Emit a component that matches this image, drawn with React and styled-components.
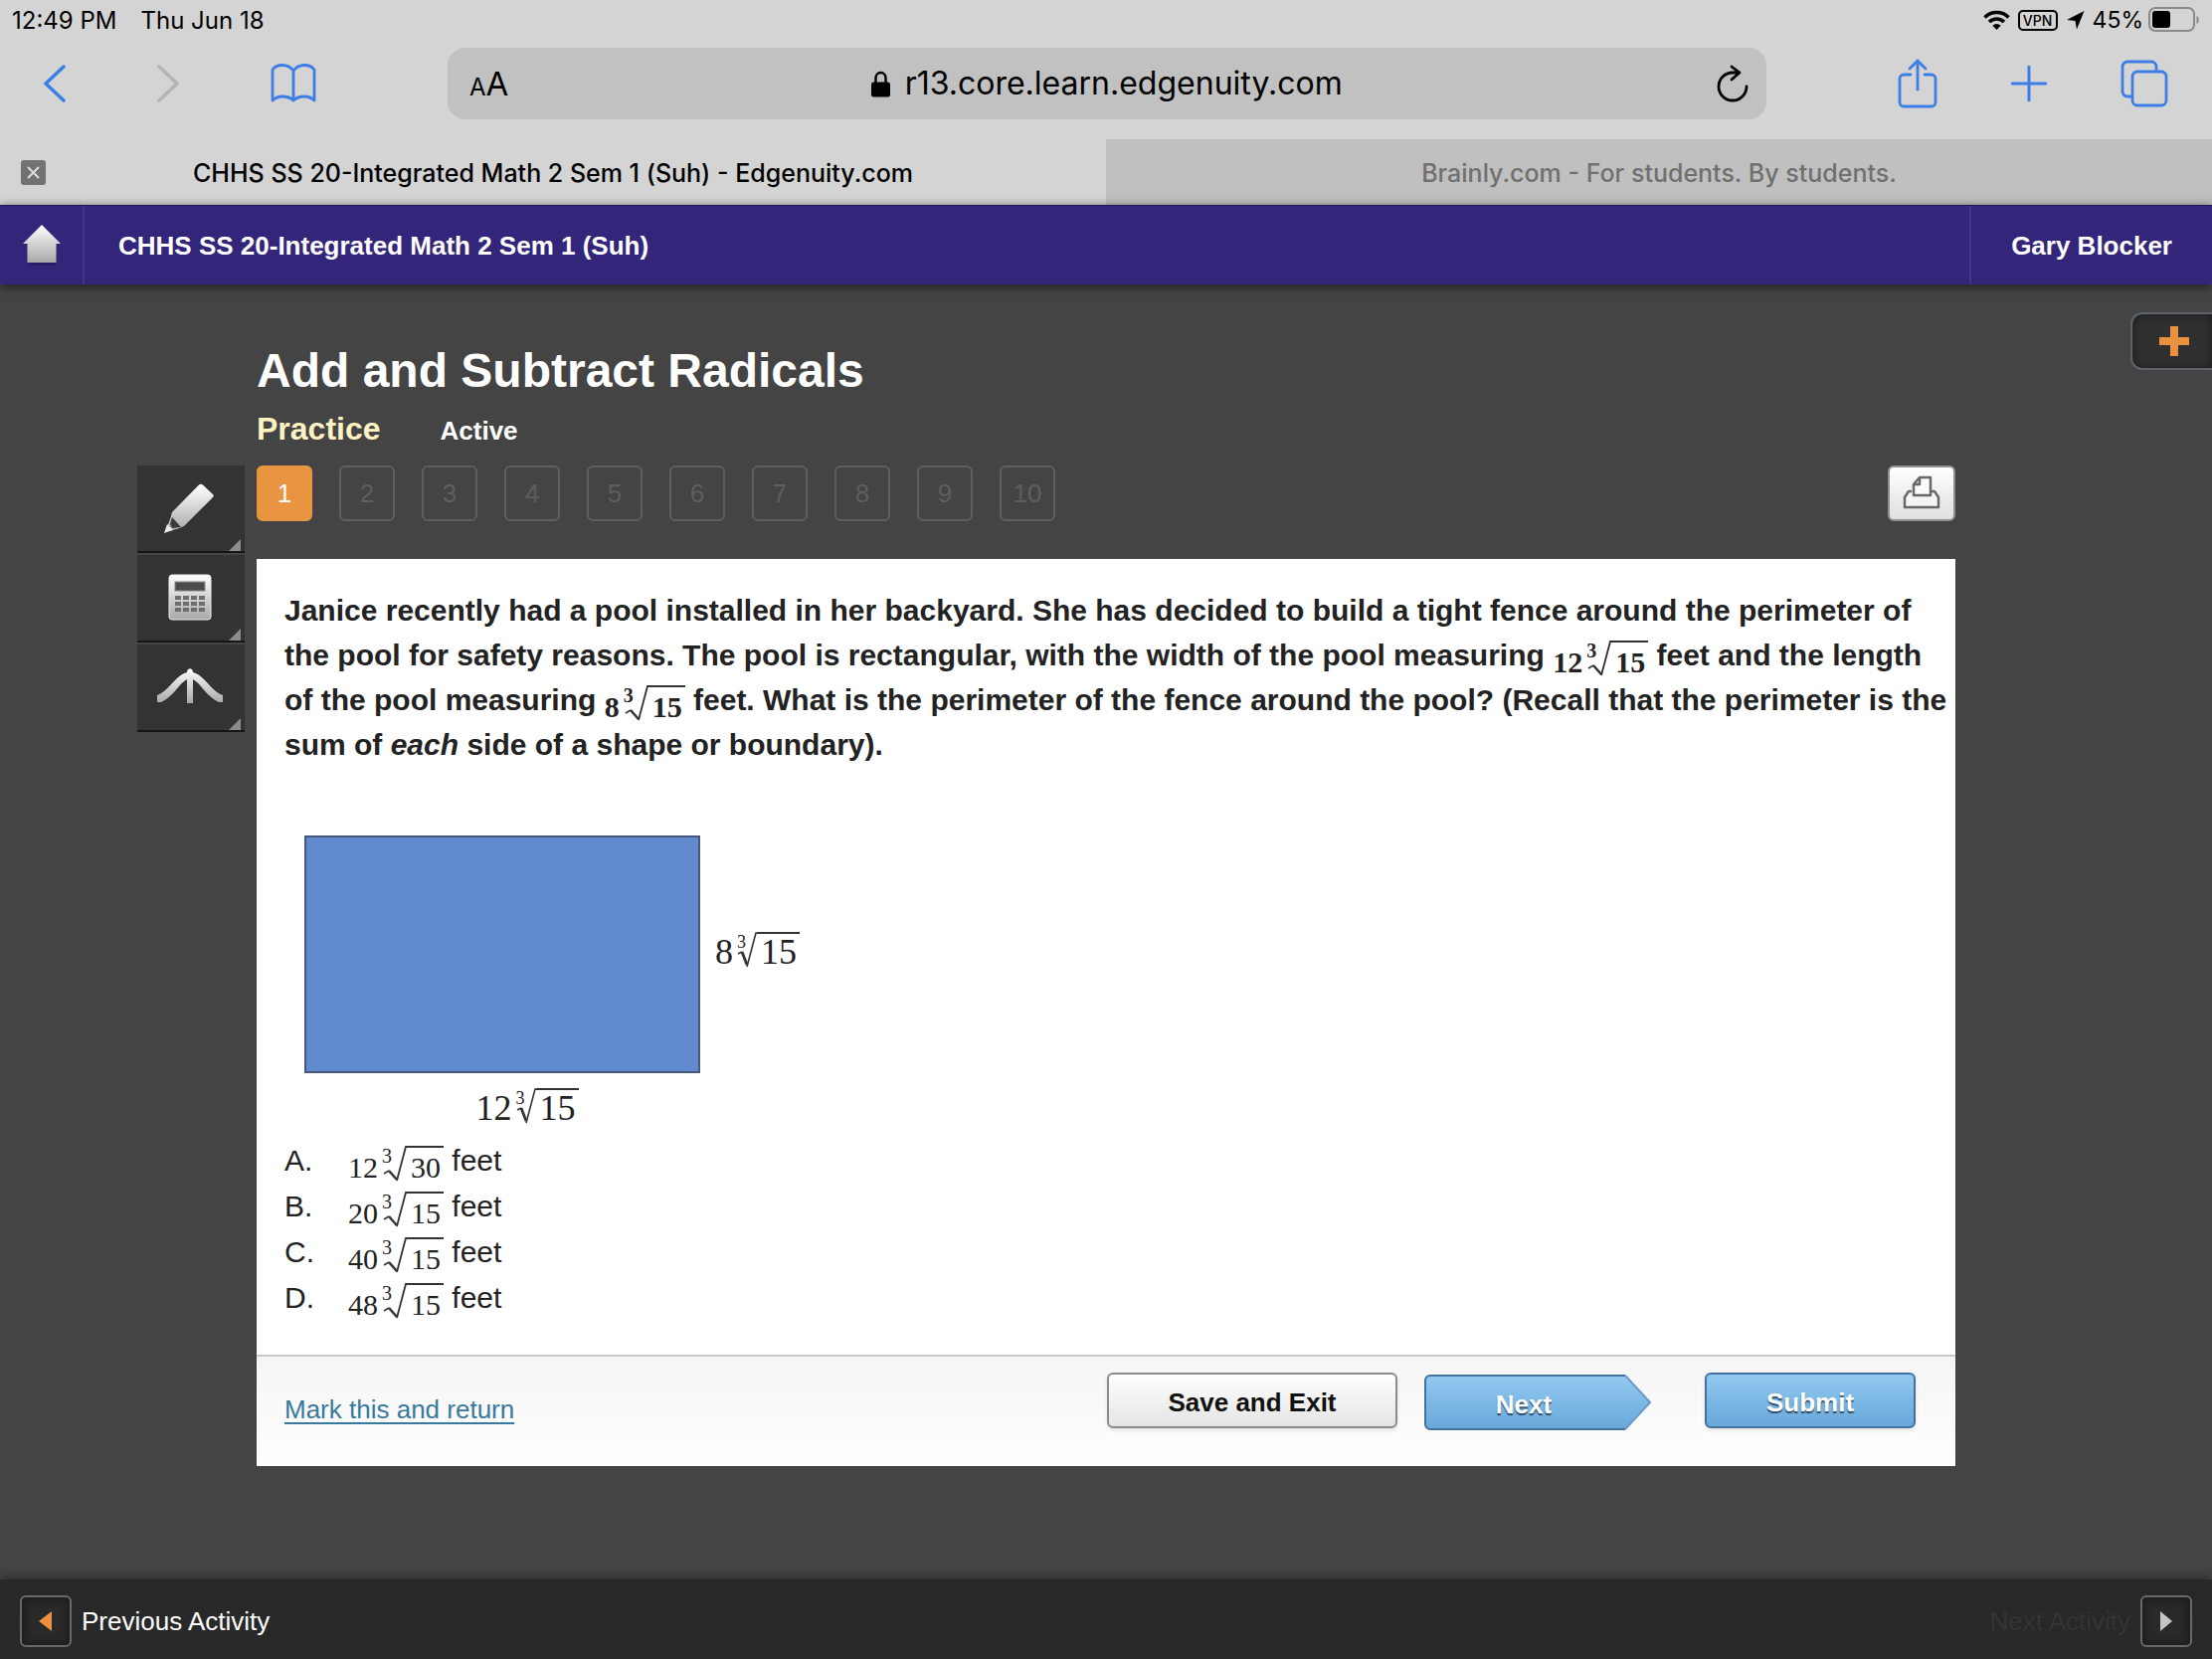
import styled, { createGlobalStyle, css } from "styled-components";

const GlobalStyle = createGlobalStyle`
  * {
    box-sizing: border-box;
  }

  body {
    margin: 0;
    background-color: #444444;
    font-family: "Liberation Sans", Arial, sans-serif;
    color: #222222;
  }

  button,
  input {
    font-family: inherit;
    margin: 0;
    padding: 0;
    border: none;
    background: none;
    cursor: pointer;
  }

  svg {
    display: block;
    flex-shrink: 0;
  }
`;

const Page = styled.div`
  min-height: 100vh;
  display: flex;
  flex-direction: column;
`;

/* ---------- browser chrome ---------- */

const Chrome = styled.div`
  background-color: #d4d4d4;
  color: #000000;
  font-family: Inter, "Liberation Sans", sans-serif;
`;

const StatusBar = styled.div`
  display: flex;
  align-items: center;
  height: 40px;
  padding: 0 12px;
  font-size: 24px;
`;

const StatusDate = styled.span`
  margin-left: 24px;
`;

const StatusIcons = styled.div`
  display: flex;
  align-items: center;
  gap: 8px;
  margin-left: auto;
  font-size: 23px;
`;

const VpnBadge = styled.span`
  width: 40px;
  border: 2px solid #000000;
  border-radius: 5px;
  font-size: 14px;
  font-weight: 500;
  line-height: 17px;
  text-align: center;
`;

const Battery = styled.span`
  display: flex;
  align-items: center;
  gap: 5px;
`;

const Toolbar = styled.div`
  display: flex;
  align-items: center;
  height: 100px;
  padding: 0 44px 12px;
`;

const ToolbarGroup = styled.div`
  display: flex;
  align-items: center;
  gap: ${(props) => props.$gap}px;
`;

const ToolbarButton = styled.button`
  color: ${(props) => (props.disabled ? "#b4b4b4" : "#3d7ee6")};
`;

const AddressBar = styled.div`
  flex: 1;
  display: flex;
  align-items: center;
  justify-content: space-between;
  height: 72px;
  margin: 0 132px;
  padding: 0 18px 0 22px;
  border-radius: 18px;
  background-color: #c1c1c1;
`;

const TextSize = styled.button`
  padding-top: 4px;
  font-size: 33px;
  line-height: 40px;
  color: #000000;
`;

const SmallLetter = styled.span`
  font-size: 24px;
`;

const Address = styled.label`
  display: flex;
  align-items: center;
  gap: 15px;
  padding-right: 12px;
`;

const AddressInput = styled.input`
  field-sizing: content;
  font-size: 32px;
  line-height: 40px;
  color: #000000;
  cursor: text;
`;

const Tabs = styled.div`
  display: flex;
`;

const Tab = styled.div`
  position: relative;
  flex: 1;
  display: flex;
  align-items: center;
  height: 66px;
  padding: 2px 48px 0;
  background-color: ${(props) => (props.$active ? "#d4d4d4" : "#c0c0c0")};
`;

const TabTitle = styled.a`
  flex: 1;
  font-size: 25px;
  font-weight: 500;
  text-align: center;
  text-decoration: none;
  color: ${(props) => (props.$active ? "#000000" : "#707070")};
`;

const CloseTab = styled.button`
  position: absolute;
  left: 21px;
  top: 21px;
  display: flex;
  align-items: center;
  justify-content: center;
  width: 25px;
  height: 25px;
  border-radius: 3px;
  background-color: #727272;
`;

/* ---------- course header ---------- */

const CourseHeader = styled.header`
  position: relative;
  display: flex;
  align-items: stretch;
  height: 80px;
  background-color: #33257a;
  border-top: 1px solid #1d1650;
  box-shadow: 0 2px 10px rgba(0, 0, 0, 0.6);
  color: #ffffff;
  font-size: 26px;
  font-weight: bold;
`;

const HomeLink = styled.a`
  display: flex;
  align-items: center;
  justify-content: center;
  width: 85px;
  border-right: 2px solid #41348a;
`;

const CourseName = styled.span`
  flex: 1;
  display: flex;
  align-items: center;
  padding: 2px 0 0 34px;
`;

const StudentName = styled.span`
  display: flex;
  align-items: center;
  padding: 2px 40px 0;
  border-left: 2px solid #41348a;
`;

/* ---------- lesson ---------- */

const Stage = styled.main`
  position: relative;
  flex: 1;
  padding: 58px 258px 112px 138px;
`;

const NotesTab = styled.button`
  position: absolute;
  top: 28px;
  right: 0;
  display: flex;
  align-items: center;
  width: 82px;
  height: 58px;
  padding-left: 27px;
  border: 2px solid #5d646c;
  border-right: none;
  border-radius: 12px 0 0 12px;
  background-color: #303030;
  box-shadow: inset 0 0 10px #1a1a1a;
`;

const LessonHeading = styled.div`
  margin-left: 120px;
  color: #ffffff;
`;

const LessonTitle = styled.h1`
  margin: 0;
  font-size: 48px;
  line-height: 58px;
`;

const LessonStatus = styled.div`
  display: flex;
  align-items: baseline;
  gap: 60px;
  margin-bottom: 6px;
  line-height: 58px;
  font-weight: bold;
  font-size: 26px;
`;

const LessonKind = styled.span`
  font-size: 32px;
  color: #fff3c3;
`;

const Columns = styled.div`
  display: grid;
  grid-template-columns: 108px 1fr;
  gap: 12px;
  align-items: start;
`;

const ToolRail = styled.div`
  display: flex;
  flex-direction: column;
  gap: 2px;
`;

const ToolButton = styled.button`
  position: relative;
  display: flex;
  align-items: center;
  justify-content: center;
  height: 88px;
  padding-right: 2px;
  background-color: #333333;
  border-bottom: 2px solid #161616;

  &::after {
    content: "";
    position: absolute;
    right: 4px;
    bottom: 0;
    border-left: 12px solid transparent;
    border-bottom: 12px solid #8c8c8c;
  }
`;

const QuestionNav = styled.nav`
  display: flex;
  gap: 27px;
  margin-bottom: 38px;
`;

const QuestionNumber = styled.button`
  width: 56px;
  height: 56px;
  border: 2px solid #5e5e5e;
  border-radius: 6px;
  font-size: 26px;
  color: #5e5e5e;

  ${(props) =>
    props.$current &&
    css`
      border-color: #e99441;
      background-color: #e99441;
      color: #ffffff;
    `}
`;

const PrintButton = styled.button`
  display: flex;
  align-items: center;
  justify-content: center;
  width: 68px;
  height: 56px;
  margin-left: auto;
  padding-bottom: 2px;
  border: 2px solid #8f8f8f;
  border-radius: 6px;
  background: linear-gradient(#ffffff, #dfdfdf);
`;

const Card = styled.section`
  background-color: #ffffff;
`;

const CardBody = styled.div`
  padding: 29px 4px 34px 28px;
`;

const Question = styled.p`
  margin: 0 0 69px;
  font-size: 30px;
  font-weight: bold;
  line-height: 45px;
`;

const Figure = styled.figure`
  display: grid;
  grid-template-columns: 398px auto;
  justify-content: start;
  align-items: center;
  gap: 15px;
  margin: 0 0 14px 20px;
`;

const PoolShape = styled.div`
  height: 239px;
  border: 2px solid #46597b;
  background-color: #628bcf;
`;

const HeightLabel = styled.div`
  display: flex;
  padding-bottom: 10px;
`;

const WidthLabel = styled.div`
  display: flex;
  justify-content: center;
  padding-left: 50px;
`;

const Options = styled.ol`
  list-style: none;
  margin: 0;
  padding: 0;
  font-size: 30px;
  line-height: 46px;
`;

const Option = styled.li`
  display: grid;
  grid-template-columns: 64px auto;
  justify-content: start;
`;

const CardFooter = styled.div`
  display: flex;
  align-items: flex-start;
  height: 112px;
  padding: 16px 40px 0 28px;
  border-top: 2px solid #cccccc;
  background: linear-gradient(#f5f5f5, #ffffff);
`;

const MarkLink = styled.a`
  margin-right: auto;
  font-size: 26px;
  line-height: 74px;
  color: #38799f;
  text-underline-offset: 4px;
`;

const SaveButton = styled.button`
  width: 292px;
  height: 56px;
  padding-top: 4px;
  border: 2px solid #8c8c8c;
  border-radius: 6px;
  background: linear-gradient(#ffffff, #e4e4e4);
  box-shadow: 0 2px 4px rgba(0, 0, 0, 0.1);
  font-size: 26px;
  font-weight: bold;
  color: #111111;
`;

const BlueButton = styled(SaveButton)`
  width: 212px;
  border-color: #44719f;
  background: linear-gradient(#92c9f0, #69a8da);
  color: #ffffff;
  text-shadow: 0 2px 1px rgba(30, 50, 70, 0.8);
`;

const NextButton = styled.button`
  position: relative;
  width: 228px;
  height: 56px;
  margin: 2px 54px 0 27px;
  padding: 4px 28px 0 0;
  font-size: 26px;
  font-weight: bold;
  color: #ffffff;
  text-shadow: 0 2px 1px rgba(30, 50, 70, 0.8);
`;

const NextShape = styled.svg`
  position: absolute;
  inset: 0;
`;

const NextText = styled.span`
  position: relative;
`;

/* ---------- bottom bar ---------- */

const ActivityBar = styled.footer`
  position: relative;
  display: flex;
  align-items: center;
  justify-content: space-between;
  height: 80px;
  padding: 4px 20px 0;
  background-color: #282828;
  box-shadow: 0 -2px 10px rgba(0, 0, 0, 0.4);
`;

const ActivityButton = styled.button`
  display: flex;
  align-items: center;
  gap: 10px;
  font-size: 26px;
  color: ${(props) => (props.disabled ? "#343434" : "#ffffff")};
`;

const ActivityIcon = styled.span`
  display: flex;
  align-items: center;
  justify-content: center;
  width: 52px;
  height: 52px;
  border: 2px solid #686868;
  border-radius: 6px;
  background-color: #292929;
  box-shadow: inset 0 0 10px #151515;
`;

/* ---------- radical expression ---------- */

const Expression = styled.span`
  display: inline-flex;
  align-items: flex-start;
  height: 36px;
  vertical-align: -7px;
  font-family: "Liberation Serif", "Times New Roman", serif;
  font-size: ${(props) => (props.$large ? 36 : 30)}px;
  line-height: 36px;
  color: #222222;
`;

const Coefficient = styled.span`
  padding-top: ${(props) => (props.$large ? 2 : 4)}px;
`;

const Root = styled.span`
  position: relative;
  margin-left: 4px;
`;

const RootIndex = styled.span`
  position: absolute;
  top: 0;
  left: 0;
  font-size: ${(props) => (props.$large ? 18 : 20)}px;
  line-height: 20px;
`;

const Radicand = styled.span`
  padding: ${(props) => (props.$large ? 0 : 2)}px 3px 0 4px;
  border-top: 2px solid #333333;
`;

const Radical = ({ coefficient, radicand, large }) => (
  <Expression $large={large}>
    <Coefficient $large={large}>{coefficient}</Coefficient>
    <Root>
      <RootIndex $large={large}>3</RootIndex>
      {large ? (
        <svg width="20" height="36" viewBox="0 0 20 36" fill="none" stroke="#333">
          <path d="M1 22l4-2" strokeWidth="1.5" />
          <path d="M5 20l5 13" strokeWidth="2.8" />
          <path d="M10 35L19 1h1" strokeWidth="1.6" />
        </svg>
      ) : (
        <svg width="25" height="36" viewBox="0 0 25 36" fill="none" stroke="#333">
          <path d="M2 28l5-3" strokeWidth="1.5" />
          <path d="M7 25l8 9" strokeWidth="2.5" />
          <path d="M15 35L24 1h1" strokeWidth="1.8" />
        </svg>
      )}
    </Root>
    <Radicand $large={large}>{radicand}</Radicand>
  </Expression>
);

/* ---------- icons ---------- */

const Chevron = ({ back }) => (
  <svg width="22" height="40" viewBox="0 0 22 40" fill="none" stroke="currentColor" strokeWidth="3.5" strokeLinecap="round" strokeLinejoin="round">
    <path d={back ? "M20 3L2 20l18 17" : "M2 3l18 17L2 37"} />
  </svg>
);

const BookIcon = () => (
  <svg width="46" height="42" viewBox="0 0 46 42" fill="none" stroke="currentColor" strokeWidth="2.8" strokeLinejoin="round">
    <path d="M23 8C20 4 16 2.500 12 2.500S4 4 2 7v31c3-3 6-4 10-4s8 1 11 4c3-3 7-4 11-4s7 1 10 4V7c-2-3-6-4.500-10-4.500S26 4 23 8zM23 8v30" />
  </svg>
);

const ShareIcon = () => (
  <svg width="40" height="50" viewBox="0 0 40 50" fill="none" stroke="currentColor" strokeWidth="2.800" strokeLinecap="round" strokeLinejoin="round">
    <path d="M13 16H6a4 4 0 0 0-4 4v24a4 4 0 0 0 4 4h28a4 4 0 0 0 4-4V20a4 4 0 0 0-4-4h-7M20 31V2M12 10l8-8 8 8" />
  </svg>
);

const PlusIcon = () => (
  <svg width="36" height="36" viewBox="0 0 36 36" fill="none" stroke="currentColor" strokeWidth="3" strokeLinecap="round">
    <path d="M18 1v34M1 18h34" />
  </svg>
);

const TabsIcon = () => (
  <svg width="48" height="48" viewBox="0 0 48 48" fill="none" stroke="currentColor" strokeWidth="2.800">
    <path d="M12 37H7a5 5 0 0 1-5-5V7a5 5 0 0 1 5-5h24a5 5 0 0 1 5 5v5" />
    <rect x="12" y="12" width="34" height="34" rx="5" />
  </svg>
);

const LockIcon = () => (
  <svg width="19" height="27" viewBox="0 0 19 27">
    <path d="M4.500 13V7.500a5 5.500 0 0 1 10 0V13" fill="none" stroke="#000" strokeWidth="2.500" />
    <rect y="11.500" width="19" height="15" rx="2.500" />
  </svg>
);

const ReloadIcon = () => (
  <svg width="32" height="38" viewBox="0 0 32 38" fill="none" stroke="#000" strokeWidth="2.800" strokeLinecap="round" strokeLinejoin="round">
    <path d="M30 22a14 14 0 1 1-14-14h7M15 2l8 6-8 7" />
  </svg>
);

const WifiIcon = () => (
  <svg width="27" height="20" viewBox="0 0 27 20" fill="none" stroke="#000" strokeWidth="3.500">
    <path d="M1.500 7.500a17 17 0 0 1 24 0M6 12a10.600 10.600 0 0 1 15 0" />
    <path d="M13.500 20l-4.200-4.300a6 6 0 0 1 8.400 0z" fill="#000" stroke="none" />
  </svg>
);

const LocationIcon = () => (
  <svg width="19" height="20" viewBox="0 0 19 20">
    <path d="M18.500 1L11 19.500 9.500 11 1 10z" />
  </svg>
);

const BatteryIcon = () => (
  <svg width="52" height="26" viewBox="0 0 52 26">
    <rect x="1" y="1" width="45" height="23" rx="6" fill="none" stroke="#8a8a8a" strokeWidth="2" />
    <rect x="4" y="4" width="18" height="17" rx="3" />
    <path d="M48.500 9v8c3-1 3-7 0-8z" fill="#8a8a8a" />
  </svg>
);

const HomeIcon = () => (
  <svg width="40" height="42" viewBox="0 0 40 42">
    <defs>
      <linearGradient id="silver" x1="0" y1="0" x2="0" y2="1">
        <stop offset="0" stopColor="#ffffff" />
        <stop offset="1" stopColor="#a8a8a8" />
      </linearGradient>
    </defs>
    <path d="M20 0L1 19h4.500v19h29V19H39z" fill="url(#silver)" />
    <path d="M6 39.500h28" stroke="#1d1650" strokeWidth="2" opacity=".6" />
  </svg>
);

const PencilIcon = () => (
  <svg width="52" height="52" viewBox="0 0 52 52">
    <path d="M35 2.500L8 30l-2 7L1 49.500 13 47l7-3L49 15c1-1 1-2 0-3L39 2.500c-1.500-1-3-1-4 0z" fill="url(#silver)" />
    <path d="M8 35l9 10-9 1-2-4z" fill="#3a3a3a" />
    <path d="M0 51l3-9 6 6z" fill="#e8e8e8" />
  </svg>
);

const CalculatorIcon = () => (
  <svg width="44" height="48" viewBox="0 0 44 48">
    <rect x="1" y="1" width="42" height="45" rx="3" fill="url(#silver)" stroke="#efefef" />
    <rect x="7" y="8" width="30" height="9" fill="#4b4b4b" stroke="#8a8a8a" />
    {[22, 28, 34].map((y) =>
      [7, 15, 23, 31].map((x) => (
        <rect key={`${x}-${y}`} x={x} y={y} width="6" height="4" fill="#6e6e6e" />
      ))
    )}
  </svg>
);

const CompassIcon = () => (
  <svg width="68" height="38" viewBox="0 0 68 38">
    <path
      d="M1 34v-7C14 22 19 7 31 4c0-5 6-5 6 0 12 3 17 18 30 23v7h-4C50 28 46 16 37 11v24h-6V11C22 16 18 28 5 34z"
      fill="url(#silver)"
    />
  </svg>
);

const PrintIcon = () => (
  <svg width="38" height="34" viewBox="0 0 38 34" stroke="#686868" strokeWidth="2.500" strokeLinejoin="round">
    <path d="M9 16H6L2 22v10h34V22l-4-6h-3" fill="#f4f4f4" />
    <path d="M11 20V9l6-7h11v18z" fill="#fafafa" />
    <path d="M11 9h6V2" fill="none" />
  </svg>
);

const questionNumbers = [1, 2, 3, 4, 5, 6, 7, 8, 9, 10];

const options = [
  { letter: "A.", coefficient: 12, radicand: 30 },
  { letter: "B.", coefficient: 20, radicand: 15 },
  { letter: "C.", coefficient: 40, radicand: 15 },
  { letter: "D.", coefficient: 48, radicand: 15 },
];

const BrowserChrome = () => (
  <Chrome>
    <StatusBar>
      <span>12:49 PM</span>
      <StatusDate>Thu Jun 18</StatusDate>
      <StatusIcons>
        <WifiIcon />
        <VpnBadge>VPN</VpnBadge>
        <LocationIcon />
        <Battery>
          45%
          <BatteryIcon />
        </Battery>
      </StatusIcons>
    </StatusBar>
    <Toolbar>
      <ToolbarGroup $gap={92}>
        <ToolbarButton aria-label="Back">
          <Chevron back />
        </ToolbarButton>
        <ToolbarButton aria-label="Forward" disabled>
          <Chevron />
        </ToolbarButton>
        <ToolbarButton aria-label="Bookmarks">
          <BookIcon />
        </ToolbarButton>
      </ToolbarGroup>
      <AddressBar>
        <TextSize>
          <SmallLetter>A</SmallLetter>A
        </TextSize>
        <Address>
          <LockIcon />
          <AddressInput aria-label="Address" defaultValue="r13.core.learn.edgenuity.com" />
        </Address>
        <ToolbarButton aria-label="Reload">
          <ReloadIcon />
        </ToolbarButton>
      </AddressBar>
      <ToolbarGroup $gap={74}>
        <ToolbarButton aria-label="Share">
          <ShareIcon />
        </ToolbarButton>
        <ToolbarButton aria-label="New tab">
          <PlusIcon />
        </ToolbarButton>
        <ToolbarButton aria-label="Show tabs">
          <TabsIcon />
        </ToolbarButton>
      </ToolbarGroup>
    </Toolbar>
    <Tabs>
      <Tab $active>
        <CloseTab aria-label="Close tab">
          <svg width="13" height="13" viewBox="0 0 13 13" stroke="#dedede" strokeWidth="2">
            <path d="M1 1l11 11M12 1L1 12" />
          </svg>
        </CloseTab>
        <TabTitle $active href="#edgenuity">
          CHHS SS 20-Integrated Math 2 Sem 1 (Suh) - Edgenuity.com
        </TabTitle>
      </Tab>
      <Tab>
        <TabTitle href="#brainly">Brainly.com - For students. By students.</TabTitle>
      </Tab>
    </Tabs>
  </Chrome>
);

const App = () => {
  return (
    <Page>
      <GlobalStyle />
      <BrowserChrome />
      <CourseHeader>
        <HomeLink href="#home" aria-label="Home">
          <HomeIcon />
        </HomeLink>
        <CourseName>CHHS SS 20-Integrated Math 2 Sem 1 (Suh)</CourseName>
        <StudentName>Gary Blocker</StudentName>
      </CourseHeader>

      <Stage>
        <NotesTab aria-label="Open notes">
          <svg width="30" height="30" viewBox="0 0 30 30">
            <path d="M11 0h8v11h11v8H19v11h-8V19H0v-8h11z" fill="#ea9140" />
          </svg>
        </NotesTab>
        <LessonHeading>
          <LessonTitle>Add and Subtract Radicals</LessonTitle>
          <LessonStatus>
            <LessonKind>Practice</LessonKind>
            <span>Active</span>
          </LessonStatus>
        </LessonHeading>
        <Columns>
          <ToolRail>
            <ToolButton aria-label="Highlighter">
              <PencilIcon />
            </ToolButton>
            <ToolButton aria-label="Calculator">
              <CalculatorIcon />
            </ToolButton>
            <ToolButton aria-label="Drawing tools">
              <CompassIcon />
            </ToolButton>
          </ToolRail>
          <div>
            <QuestionNav>
              {questionNumbers.map((number) => (
                <QuestionNumber key={number} $current={number === 1}>
                  {number}
                </QuestionNumber>
              ))}
              <PrintButton aria-label="Print">
                <PrintIcon />
              </PrintButton>
            </QuestionNav>
            <Card>
              <CardBody>
                <Question>
                  Janice recently had a pool installed in her backyard. She has decided to build a
                  tight fence around the perimeter of the pool for safety reasons. The pool is
                  rectangular, with the width of the pool measuring{" "}
                  <Radical coefficient={12} radicand={15} /> feet and the length of the pool
                  measuring <Radical coefficient={8} radicand={15} /> feet. What is the perimeter
                  of the fence around the pool? (Recall that the perimeter is the sum of{" "}
                  <em>each</em> side of a shape or boundary).
                </Question>
                <Figure>
                  <PoolShape />
                  <HeightLabel>
                    <Radical large coefficient={8} radicand={15} />
                  </HeightLabel>
                  <WidthLabel>
                    <Radical large coefficient={12} radicand={15} />
                  </WidthLabel>
                </Figure>
                <Options>
                  {options.map((option) => (
                    <Option key={option.letter}>
                      <span>{option.letter}</span>
                      <span>
                        <Radical coefficient={option.coefficient} radicand={option.radicand} /> feet
                      </span>
                    </Option>
                  ))}
                </Options>
              </CardBody>
              <CardFooter>
                <MarkLink href="#mark">Mark this and return</MarkLink>
                <SaveButton>Save and Exit</SaveButton>
                <NextButton>
                  <NextShape width="228" height="56" viewBox="0 0 228 56">
                    <defs>
                      <linearGradient id="blue" x1="0" y1="0" x2="0" y2="1">
                        <stop offset="0" stopColor="#92c9f0" />
                        <stop offset="1" stopColor="#69a8da" />
                      </linearGradient>
                    </defs>
                    <path d="M6 1h196l25 27-25 27H6a5 5 0 0 1-5-5V6a5 5 0 0 1 5-5z" fill="url(#blue)" />
                    <path d="M202 1l25 27-25 27" fill="none" stroke="#6f9ac6" strokeWidth="2" />
                    <path d="M202 55H6a5 5 0 0 1-5-5V6a5 5 0 0 1 5-5h196" fill="none" stroke="#44719f" strokeWidth="2" />
                  </NextShape>
                  <NextText>Next</NextText>
                </NextButton>
                <BlueButton>Submit</BlueButton>
              </CardFooter>
            </Card>
          </div>
        </Columns>
      </Stage>

      <ActivityBar>
        <ActivityButton>
          <ActivityIcon>
            <svg width="14" height="20" viewBox="0 0 14 20">
              <path d="M13 0v20L0 10z" fill="#ea9140" />
            </svg>
          </ActivityIcon>
          Previous Activity
        </ActivityButton>
        <ActivityButton disabled>
          Next Activity
          <ActivityIcon>
            <svg width="14" height="20" viewBox="0 0 14 20">
              <path d="M1 0v20l12-10z" fill="#c4c4c4" />
            </svg>
          </ActivityIcon>
        </ActivityButton>
      </ActivityBar>
    </Page>
  );
};

export default App;
